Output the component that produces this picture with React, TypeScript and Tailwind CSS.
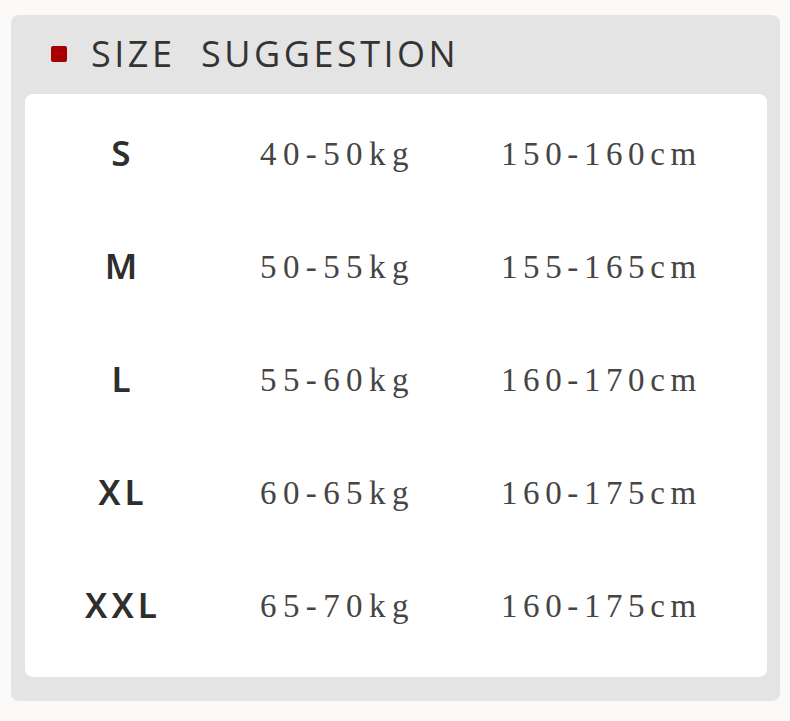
const rows = [
  { size: "S", kg: "40-50kg", cm: "150-160cm" },
  { size: "M", kg: "50-55kg", cm: "155-165cm" },
  { size: "L", kg: "55-60kg", cm: "160-170cm" },
  { size: "XL", kg: "60-65kg", cm: "160-175cm" },
  { size: "XXL", kg: "65-70kg", cm: "160-175cm" },
];

const App = () => (
  <div className="min-h-[721px] bg-[#fbfaf8] pl-[11px] pt-[15px]">
    <div className="w-[769px] h-[686px] rounded-[8px] bg-[#e4e4e4] pl-[14px] pr-[13px]">
      <div className="h-[79px] flex items-center pl-[26px] pb-[2px]">
        <span className="w-[16px] h-[16px] rounded-[2px] bg-[#a80000]" />
        <h1 className="ml-[24px] text-[36px] font-medium tracking-[3.5px] text-[#333] font-['Open_Sans',sans-serif] leading-none">
          SIZE&nbsp; SUGGESTION
        </h1>
      </div>
      <div className="h-[583px] rounded-[8px] bg-white pt-[4px]">
        {rows.map((r) => (
          <div key={r.size} className="h-[113px] grid grid-cols-[235px_241px_1fr] items-center">
            <div className="w-[192px] text-center text-[35px] font-semibold tracking-[4px] pl-[4px] pb-[4px] text-[#2e2e2e] font-['Noto_Sans',sans-serif] leading-none">
              {r.size}
            </div>
            <div className="text-[33px] tracking-[6.4px] text-[#454545] font-['Liberation_Serif',serif] leading-none">
              {r.kg}
            </div>
            <div className="text-[33px] tracking-[5.6px] text-[#454545] font-['Liberation_Serif',serif] leading-none">
              {r.cm}
            </div>
          </div>
        ))}
      </div>
    </div>
  </div>
);

export default App;
